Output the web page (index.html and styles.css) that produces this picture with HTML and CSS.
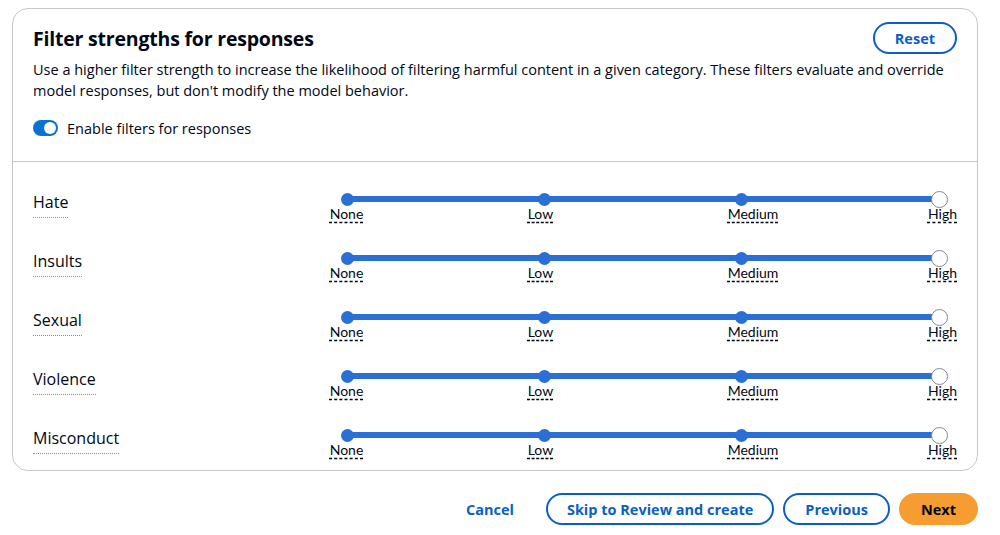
FILE: index.html
```html
<!DOCTYPE html>
<html lang="en">
<head>
    <meta charset="UTF-8">
    <meta name="viewport" content="width=device-width, initial-scale=1.0">
    <title>Filter strengths for responses</title>
    <link rel="stylesheet" href="styles.css">
</head>
<body>
    <div class="card">
        <div class="card-header">
            <div class="header-row">
                <h2>Filter strengths for responses</h2>
                <button class="btn">Reset</button>
            </div>
            <p class="description">
                Use a higher filter strength to increase the likelihood of filtering harmful content in a given category. These filters evaluate and override
                model responses, but don't modify the model behavior.
            </p>
            <label class="toggle-row">
                <span class="toggle"><span class="knob"></span></span>
                Enable filters for responses
            </label>
        </div>
        <div class="filters">
            <div class="filter-row">
                <div class="filter-name"><span>Hate</span></div>
                <div class="slider">
                    <div class="track"><i></i><i></i><i></i><b></b></div>
                    <div class="ticks"><span>None</span><span>Low</span><span>Medium</span><span>High</span></div>
                </div>
            </div>
            <div class="filter-row">
                <div class="filter-name"><span>Insults</span></div>
                <div class="slider">
                    <div class="track"><i></i><i></i><i></i><b></b></div>
                    <div class="ticks"><span>None</span><span>Low</span><span>Medium</span><span>High</span></div>
                </div>
            </div>
            <div class="filter-row">
                <div class="filter-name"><span>Sexual</span></div>
                <div class="slider">
                    <div class="track"><i></i><i></i><i></i><b></b></div>
                    <div class="ticks"><span>None</span><span>Low</span><span>Medium</span><span>High</span></div>
                </div>
            </div>
            <div class="filter-row">
                <div class="filter-name"><span>Violence</span></div>
                <div class="slider">
                    <div class="track"><i></i><i></i><i></i><b></b></div>
                    <div class="ticks"><span>None</span><span>Low</span><span>Medium</span><span>High</span></div>
                </div>
            </div>
            <div class="filter-row">
                <div class="filter-name"><span>Misconduct</span></div>
                <div class="slider">
                    <div class="track"><i></i><i></i><i></i><b></b></div>
                    <div class="ticks"><span>None</span><span>Low</span><span>Medium</span><span>High</span></div>
                </div>
            </div>
        </div>
    </div>

    <div class="actions">
        <button class="btn link">Cancel</button>
        <button class="btn skip">Skip to Review and create</button>
        <button class="btn">Previous</button>
        <button class="btn primary">Next</button>
    </div>
</body>
</html>
```

FILE: styles.css
```css
body {
    margin: 0;
    padding: 8px 22px 0 12px;
    font-family: "Open Sans", "Noto Sans", sans-serif;
    font-size: 14.5px;
    color: #000716;
    background: #fff;
}
.card {
    border: 1px solid #c6c6cd;
    border-radius: 16px;
}
.card-header {
    padding: 13px 20px 23px 20px;
    border-bottom: 1px solid #c6c6cd;
}
.header-row {
    display: flex;
    justify-content: space-between;
    align-items: center;
    height: 32px;
}
h2 {
    margin: 0;
    font-size: 19.5px;
    font-weight: 700;
    letter-spacing: -0.2px;
}
.description {
    margin: 5px 0 0 0;
    line-height: 21px;
}
.toggle-row {
    display: flex;
    align-items: center;
    gap: 9px;
    margin-top: 17px;
    height: 20px;
}
.toggle {
    width: 25px;
    height: 16px;
    border-radius: 8px;
    background: #0972d3;
    display: flex;
    justify-content: flex-end;
    align-items: center;
    padding: 0 2px;
    box-sizing: border-box;
}
.knob {
    width: 12px;
    height: 12px;
    border-radius: 50%;
    background: #fff;
}
.filters {
    padding: 27px 20px 0 20px;
}
.filter-row {
    display: flex;
    height: 59px;
}
.filter-row:last-child {
    height: 45px;
}
.filter-name {
    width: 297px;
    font-size: 16px;
    padding-top: 2px;
}
.filter-name span {
    display: inline-block;
    border-bottom: 1px dotted #8c8c94;
    padding-bottom: 4px;
}
.slider {
    width: 628px;
}
.track {
    margin: 7px 18px 0 18px;
    height: 6px;
    background: #2a6fd6;
    display: flex;
    justify-content: space-between;
    align-items: center;
}
.track i {
    display: block;
    width: 13px;
    height: 13px;
    border-radius: 50%;
    background: #2a6fd6;
    margin: 0 -6.5px;
}
.track b {
    display: block;
    width: 15px;
    height: 15px;
    border-radius: 50%;
    border: 1px solid #7d8998;
    background: #fff;
    margin: 0 -8.5px;
}
.ticks {
    display: grid;
    grid-template-columns: 198px 200px 1fr auto;
    margin-top: 3px;
    font-family: Lato, "Open Sans", sans-serif;
    font-size: 14px;
    line-height: 18px;
}
.ticks span {
    text-decoration: underline dashed;
    text-underline-offset: 3px;
}
.actions {
    display: flex;
    justify-content: flex-end;
    gap: 9px;
    margin-top: 22px;
}
.btn {
    font-family: "Open Sans", "Noto Sans", sans-serif;
    font-size: 14.5px;
    font-weight: 700;
    color: #0b5fc4;
    background: #fff;
    border: 2px solid #0b5fc4;
    border-radius: 20px;
    height: 32px;
    padding: 0 20px;
    cursor: pointer;
}
.btn.skip {
    padding: 0 19px;
}
.btn.link {
    border-color: transparent;
    margin-right: 1px;
}
.btn.primary {
    background: #f59d30;
    border-color: #f59d30;
    color: #000716;
    padding: 0 20px;
}
```
